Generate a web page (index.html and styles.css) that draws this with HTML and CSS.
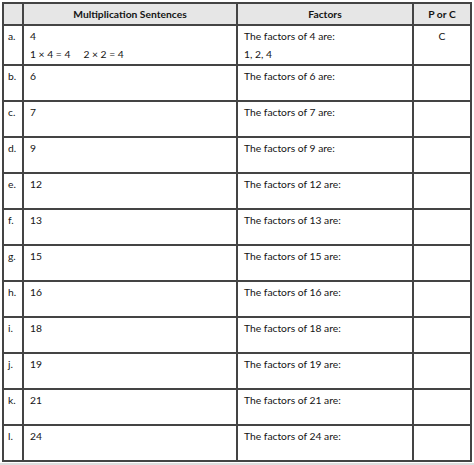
FILE: index.html
```html
<!DOCTYPE html>
<html>
<head>
<meta charset="utf-8">
<link rel="stylesheet" href="styles.css">
</head>
<body>
<div class="page">
<table class="sheet">
<colgroup>
<col class="c-letter"><col class="c-sent"><col class="c-fact"><col class="c-pc">
</colgroup>
<thead>
<tr class="head"><th></th><th>Multiplication Sentences</th><th>Factors</th><th>P or C</th></tr>
</thead>
<tbody>
<tr class="row-a"><td class="let">a.</td><td><div>4</div><div class="eq"><span>1 × 4 = 4</span><span>2 × 2 = 4</span></div></td><td><div>The factors of 4 are:</div><div>1, 2, 4</div></td><td class="pc">C</td></tr>
<tr><td class="let">b.</td><td>6</td><td>The factors of 6 are:</td><td></td></tr>
<tr><td class="let">c.</td><td>7</td><td>The factors of 7 are:</td><td></td></tr>
<tr><td class="let">d.</td><td>9</td><td>The factors of 9 are:</td><td></td></tr>
<tr><td class="let">e.</td><td>12</td><td>The factors of 12 are:</td><td></td></tr>
<tr><td class="let">f.</td><td>13</td><td>The factors of 13 are:</td><td></td></tr>
<tr><td class="let">g.</td><td>15</td><td>The factors of 15 are:</td><td></td></tr>
<tr><td class="let">h.</td><td>16</td><td>The factors of 16 are:</td><td></td></tr>
<tr><td class="let">i.</td><td>18</td><td>The factors of 18 are:</td><td></td></tr>
<tr><td class="let">j.</td><td>19</td><td>The factors of 19 are:</td><td></td></tr>
<tr><td class="let">k.</td><td>21</td><td>The factors of 21 are:</td><td></td></tr>
<tr><td class="let">l.</td><td>24</td><td>The factors of 24 are:</td><td></td></tr>
</tbody>
</table>
</div>
</body>
</html>
```
FILE: styles.css
```css
html, body {
  margin: 0;
  padding: 0;
  background: #ffffff;
}
body {
  font-family: Lato, "Open Sans", sans-serif;
  font-size: 10.3px;
  color: #141414;
}
.page {
  width: 474px;
  height: 465px;
  box-sizing: border-box;
  padding: 2px 2px 0 2px;
  background: linear-gradient(to bottom, #fff 0, #fff 463px, #dedede 463px);
}
.sheet {
  border-collapse: collapse;
  table-layout: fixed;
  width: 470px;
}
.c-letter { width: 20px; }
.c-sent { width: 214px; }
.c-fact { width: 176px; }
.c-pc { width: 58px; }
.sheet th, .sheet td {
  border: 2px solid #444444;
  padding: 1px 6px;
  line-height: 18px;
  vertical-align: top;
  text-align: left;
}
.sheet td.let {
  padding-left: 4px;
  padding-right: 0;
}
.head th {
  background: #e6e6e6;
  font-weight: bold;
  text-align: center;
  height: 20px;
  vertical-align: middle;
  padding: 0;
}
.sheet tbody tr td { height: 32px; }
.sheet tbody tr.row-a td { height: 34px; }
.eq span { margin-right: 13px; }
.sheet td.pc { text-align: center; padding: 1px 0; }
```
